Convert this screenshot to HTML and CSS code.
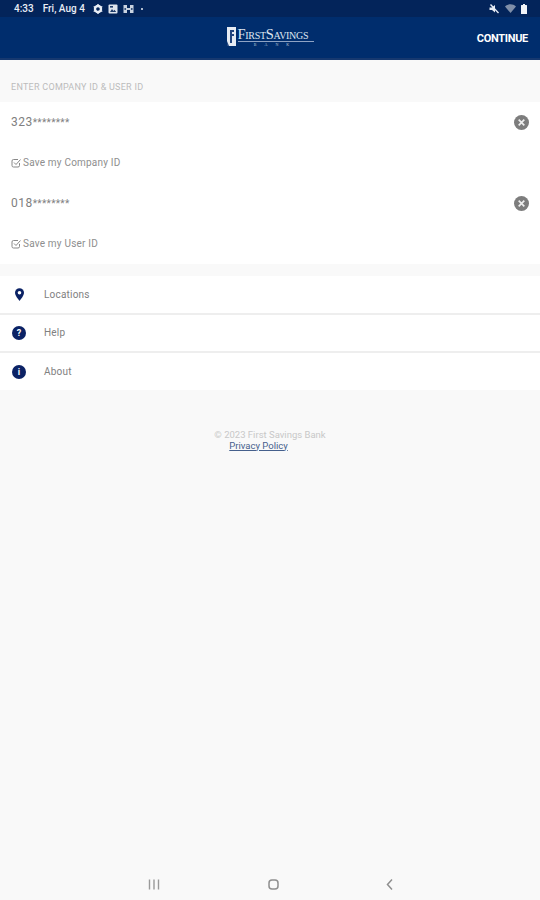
FILE: index.html
```html
<!DOCTYPE html>
<html lang="en">

<head>
  <meta charset="UTF-8">
  <meta name="viewport" content="width=device-width, initial-scale=1.0">
  <title>First Savings Bank Login</title>
  <link rel="stylesheet" href="styles.css">
</head>

<body>
  <div class="app">
    <div class="status-bar">
      <div class="status-left">
        <span class="status-time">4:33</span>
        <span class="status-date">Fri, Aug 4</span>
        <svg class="status-icon" width="10" height="10" viewBox="0 0 10 10">
          <circle cx="5" cy="5" r="3" fill="none" stroke="#e8edf5" stroke-width="2.4" />
          <path d="M5 0v2M5 8v2M0.7 2.5l1.7 1M7.6 6.5l1.7 1M0.7 7.5l1.7-1M7.6 3.5l1.7-1" stroke="#e8edf5" stroke-width="1.4" />
        </svg>
        <svg class="status-icon" width="10" height="10" viewBox="0 0 10 10">
          <rect x="0.5" y="0.5" width="9" height="9" rx="1" fill="#dfe5ee" />
          <path d="M2 8l2-3 1.5 2 1-1.2L8.2 8z" fill="#1d3b6b" />
          <rect x="2" y="2" width="3" height="1.6" fill="#1d3b6b" />
        </svg>
        <svg class="status-icon" width="11" height="10" viewBox="0 0 11 10">
          <path d="M0.5 1h3.5v8H0.5zM7 1h3.5v8H7z" fill="#c9d2e0" />
          <path d="M4 5h3" stroke="#c9d2e0" stroke-width="2" />
          <circle cx="2.2" cy="5" r="0.9" fill="#1d3b6b" />
          <circle cx="8.8" cy="5" r="0.9" fill="#1d3b6b" />
        </svg>
        <span class="status-dot"></span>
      </div>
      <div class="status-right">
        <svg width="11" height="10" viewBox="0 0 11 10">
          <path d="M0.5 3.5h2.5L6 1v7.5L3 6H0.5z" fill="#e8edf5" />
          <path d="M1.5 0.5l8 8.5" stroke="#e8edf5" stroke-width="1.3" />
        </svg>
        <svg width="11" height="9" viewBox="0 0 11 9">
          <path d="M0 2.5C3 -0.5 8 -0.5 11 2.5L5.5 9z" fill="#7f8fa9" />
        </svg>
        <svg width="6" height="10" viewBox="0 0 6 10">
          <path d="M2 0h2v1h1.500a.5.5 0 0 1 .5.5V10H0V1.500a.5.5 0 0 1 .5-.5H2z" fill="#f2f4f8" />
        </svg>
      </div>
    </div>

    <header class="app-bar">
      <div class="logo">
        <svg class="logo-mark" width="9" height="19" viewBox="0 0 9 19">
          <rect width="9" height="19" fill="#e6ebf3" />
          <path d="M3 3h4v2H5v2h2v2H5v7H3z" fill="#23457e" />
          <path d="M0 14l2 5H0z" fill="#23457e" />
        </svg>
        <div class="logo-text">
          <div class="logo-name">FirstSavings</div>
          <div class="logo-sub">BANK</div>
        </div>
      </div>
      <a class="continue-link" href="#">CONTINUE</a>
    </header>

    <main>
      <div class="section-label">ENTER COMPANY ID &amp; USER ID</div>

      <section class="login-card">
        <div class="field-row">
          <span class="field-value">323<span class="field-mask">********</span></span>
          <svg class="clear-icon" width="15" height="15" viewBox="0 0 16 16">
            <circle cx="8" cy="8" r="8" fill="#7d7d7d" />
            <path d="M5 5l6 6M11 5l-6 6" stroke="#eeeeee" stroke-width="1.800" />
          </svg>
        </div>
        <div class="save-row">
          <svg width="10" height="10" viewBox="0 0 10 10">
            <path d="M8.500 5v2.500a1.500 1.500 0 0 1-1.500 1.500H2.500A1.500 1.500 0 0 1 1 7.500V3a1.500 1.500 0 0 1 1.500-1.500H7" fill="none" stroke="#888" stroke-width="1" />
            <path d="M3 4.500l2 2L9.500 1.500" fill="none" stroke="#888" stroke-width="1" />
          </svg>
          <span>Save my Company ID</span>
        </div>
        <div class="field-row">
          <span class="field-value">018<span class="field-mask">********</span></span>
          <svg class="clear-icon" width="15" height="15" viewBox="0 0 16 16">
            <circle cx="8" cy="8" r="8" fill="#7d7d7d" />
            <path d="M5 5l6 6M11 5l-6 6" stroke="#eeeeee" stroke-width="1.800" />
          </svg>
        </div>
        <div class="save-row">
          <svg width="10" height="10" viewBox="0 0 10 10">
            <path d="M8.500 5v2.500a1.500 1.500 0 0 1-1.500 1.500H2.500A1.500 1.500 0 0 1 1 7.500V3a1.500 1.500 0 0 1 1.500-1.500H7" fill="none" stroke="#888" stroke-width="1" />
            <path d="M3 4.500l2 2L9.500 1.500" fill="none" stroke="#888" stroke-width="1" />
          </svg>
          <span>Save my User ID</span>
        </div>
      </section>

      <nav class="menu">
        <a class="menu-item" href="#">
          <span class="menu-icon">
            <svg width="9" height="13" viewBox="0 0 10 14">
              <path d="M5 0a5 5 0 0 1 5 5c0 3.500-5 9-5 9S0 8.500 0 5a5 5 0 0 1 5-5z" fill="#0b2265" />
              <circle cx="5" cy="5" r="2" fill="#fff" />
            </svg>
          </span>
          Locations
        </a>
        <a class="menu-item" href="#">
          <span class="menu-icon"><span class="round-icon">?</span></span>
          Help
        </a>
        <a class="menu-item" href="#">
          <span class="menu-icon"><span class="round-icon">i</span></span>
          About
        </a>
      </nav>

      <footer class="legal">
        <div>© 2023 First Savings Bank</div>
        <a class="privacy-link" href="#">Privacy Policy</a>
      </footer>
    </main>

    <div class="nav-bar">
      <svg width="12" height="11" viewBox="0 0 12 11">
        <path d="M1.500 0.500v10M6 0.500v10M10.500 0.500v10" stroke="#9a9a9a" stroke-width="1.400" />
      </svg>
      <svg width="11" height="11" viewBox="0 0 11 11">
        <rect x="1" y="1" width="9" height="9" rx="3" fill="none" stroke="#8f8f8f" stroke-width="1.500" />
      </svg>
      <svg width="7" height="11" viewBox="0 0 7 11">
        <path d="M6 0.500L1.500 5.500 6 10.500" fill="none" stroke="#8f8f8f" stroke-width="1.500" />
      </svg>
    </div>
  </div>
</body>

</html>
```

FILE: styles.css
```css
* {
  margin: 0;
  padding: 0;
  box-sizing: border-box;
}

body {
  font-family: 'Roboto', sans-serif;
  background: #f9f9f9;
  color: #666;
  overflow: hidden;
}

a {
  text-decoration: none;
  color: inherit;
}

.app {
  height: 900px;
  display: flex;
  flex-direction: column;
}

.status-bar {
  height: 17px;
  background: #03245a;
  color: #e8edf5;
  display: flex;
  justify-content: space-between;
  align-items: center;
  padding: 0 13px 0 14px;
  font-size: 10px;
  font-weight: 500;
}

.status-left,
.status-right {
  display: flex;
  align-items: center;
  gap: 5px;
}

.status-date {
  margin: 0 3px 0 4px;
}

.status-dot {
  width: 2px;
  height: 2px;
  margin-left: 2px;
  border-radius: 50%;
  background: #e8edf5;
}

.app-bar {
  height: 43px;
  background: #002d6d;
  border-bottom: 2px solid #16386f;
  color: #fff;
  display: grid;
  grid-template-columns: 1fr auto 1fr;
  align-items: center;
  padding-right: 12px;
  padding-left: 12px;
}

.logo {
  grid-column: 2;
  display: flex;
  gap: 2px;
  color: #dfe6f0;
  margin-bottom: 2px;
}

.logo-text {
  width: 76px;
  font-family: 'Liberation Serif', serif;
}

.logo-name {
  font-size: 14.500px;
  line-height: 14px;
  font-variant: small-caps;
  letter-spacing: -0.3px;
  border-bottom: 1px solid #8fa3c4;
  white-space: nowrap;
}

.logo-sub {
  font-size: 4px;
  line-height: 5px;
  letter-spacing: 8px;
  text-align: center;
  color: #b8c5d9;
}

.continue-link {
  grid-column: 3;
  justify-self: end;
  font-size: 11px;
  font-weight: 700;
  letter-spacing: -0.3px;
  margin-top: 1px;
}

main {
  flex: 1;
}

.section-label {
  height: 42px;
  padding: 22px 11px 0;
  font-size: 9px;
  line-height: 11px;
  letter-spacing: 0.27px;
  color: #bcbcbc;
}

.login-card {
  background: #fff;
  margin-bottom: 12px;
}

.field-row {
  height: 40px;
  display: flex;
  align-items: center;
  justify-content: space-between;
  padding: 0 11px;
}

.field-value {
  font-size: 12px;
  letter-spacing: 0.5px;
  color: #808080;
}

.field-mask {
  font-size: 10px;
  letter-spacing: 0.3px;
}

.save-row {
  height: 41px;
  display: flex;
  align-items: center;
  gap: 2px;
  padding: 0 11px;
  font-size: 10px;
  letter-spacing: 0.2px;
  color: #8e8e8e;
}

.menu {
  background: #fff;
  margin-bottom: 38.500px;
}

.menu-item {
  height: 38.500px;
  display: flex;
  align-items: center;
  font-size: 10px;
  letter-spacing: 0.2px;
  color: #808080;
  border-bottom: 2px solid #eeeeee;
}

.menu-item:last-child {
  height: 37px;
  border-bottom: none;
}

.menu-icon {
  width: 44px;
  display: flex;
  justify-content: center;
  padding-right: 6px;
}

.round-icon {
  width: 14px;
  height: 14px;
  border-radius: 50%;
  background: #0b2265;
  color: #fff;
  font-size: 9px;
  font-weight: 700;
  display: flex;
  align-items: center;
  justify-content: center;
}

.legal {
  text-align: center;
  font-size: 9.500px;
  line-height: 11px;
  color: #c8c8c8;
}

.privacy-link {
  color: #45608c;
  text-decoration: underline;
  display: block;
  margin-right: 23px;
}

.nav-bar {
  height: 36px;
  display: flex;
  align-items: center;
  padding: 4px 147px 0 148px;
  justify-content: space-between;
}
```
